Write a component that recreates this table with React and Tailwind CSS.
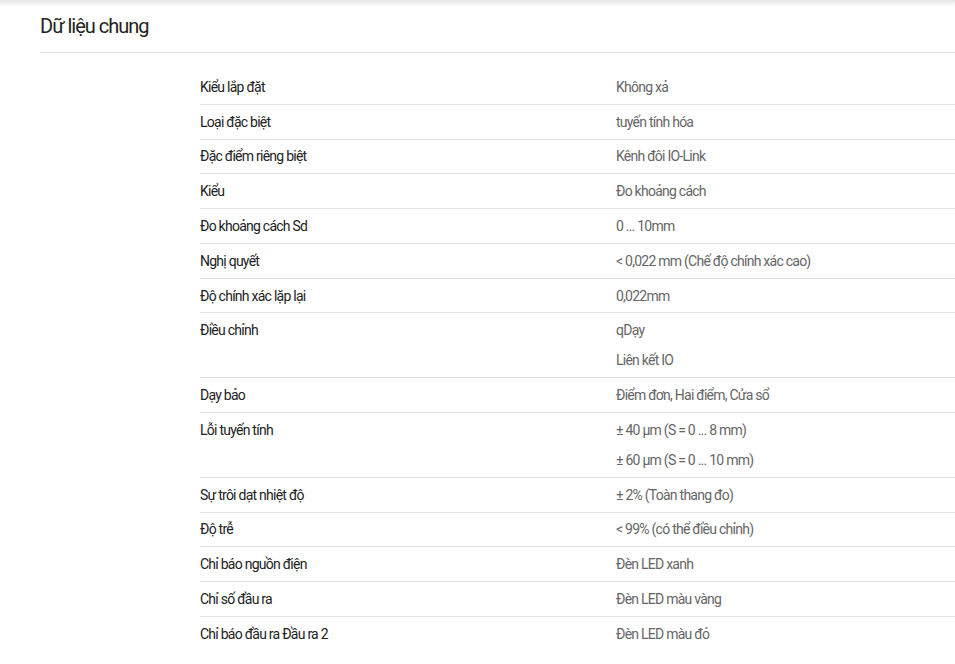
const rows = [
  { label: "Kiểu lắp đặt", values: ["Không xả"] },
  { label: "Loại đặc biệt", values: ["tuyến tính hóa"] },
  { label: "Đặc điểm riêng biệt", values: ["Kênh đôi IO-Link"] },
  { label: "Kiểu", values: ["Đo khoảng cách"] },
  { label: "Đo khoảng cách Sd", values: ["0 … 10mm"] },
  { label: "Nghị quyết", values: ["< 0,022 mm (Chế độ chính xác cao)"] },
  { label: "Độ chính xác lặp lại", values: ["0,022mm"] },
  { label: "Điều chỉnh", values: ["qDạy", "Liên kết IO"] },
  { label: "Dạy bảo", values: ["Điểm đơn, Hai điểm, Cửa sổ"] },
  {
    label: "Lỗi tuyến tính",
    values: ["± 40 µm (S = 0 ... 8 mm)", "± 60 µm (S = 0 ... 10 mm)"],
  },
  { label: "Sự trôi dạt nhiệt độ", values: ["± 2% (Toàn thang đo)"] },
  { label: "Độ trễ", values: ["< 99% (có thể điều chỉnh)"] },
  { label: "Chỉ báo nguồn điện", values: ["Đèn LED xanh"] },
  { label: "Chỉ số đầu ra", values: ["Đèn LED màu vàng"] },
  { label: "Chỉ báo đầu ra Đầu ra 2", values: ["Đèn LED màu đỏ"] },
];

export default function App() {
  return (
    <div className="relative min-h-[664px] bg-white font-['Roboto',sans-serif]">
      <div className="absolute inset-x-0 top-0 h-[7px] bg-gradient-to-b from-[#e6e6e6] to-white" />

      <div className="ml-[40px] border-b border-[#e2e2e2] pt-[12px] pb-[12px]">
        <h2 className="text-[20px] leading-[28px] tracking-[-1px] text-[#222]">
          Dữ liệu chung
        </h2>
      </div>

      <div className="ml-[200px] mt-[17px]">
        {rows.map((row, i) => (
          <div
            key={row.label}
            className={`flex py-[6.9px] text-[14px] tracking-[-0.75px] ${
              i < rows.length - 1 ? "border-b border-[#e2e2e2]" : ""
            }`}
          >
            <div className="w-[416px] shrink-0 leading-[20px] text-[#222]">
              {row.label}
            </div>
            <div className="flex flex-col gap-[10px] leading-[20px] text-[#666]">
              {row.values.map((v) => (
                <div key={v}>{v}</div>
              ))}
            </div>
          </div>
        ))}
      </div>
    </div>
  );
}
